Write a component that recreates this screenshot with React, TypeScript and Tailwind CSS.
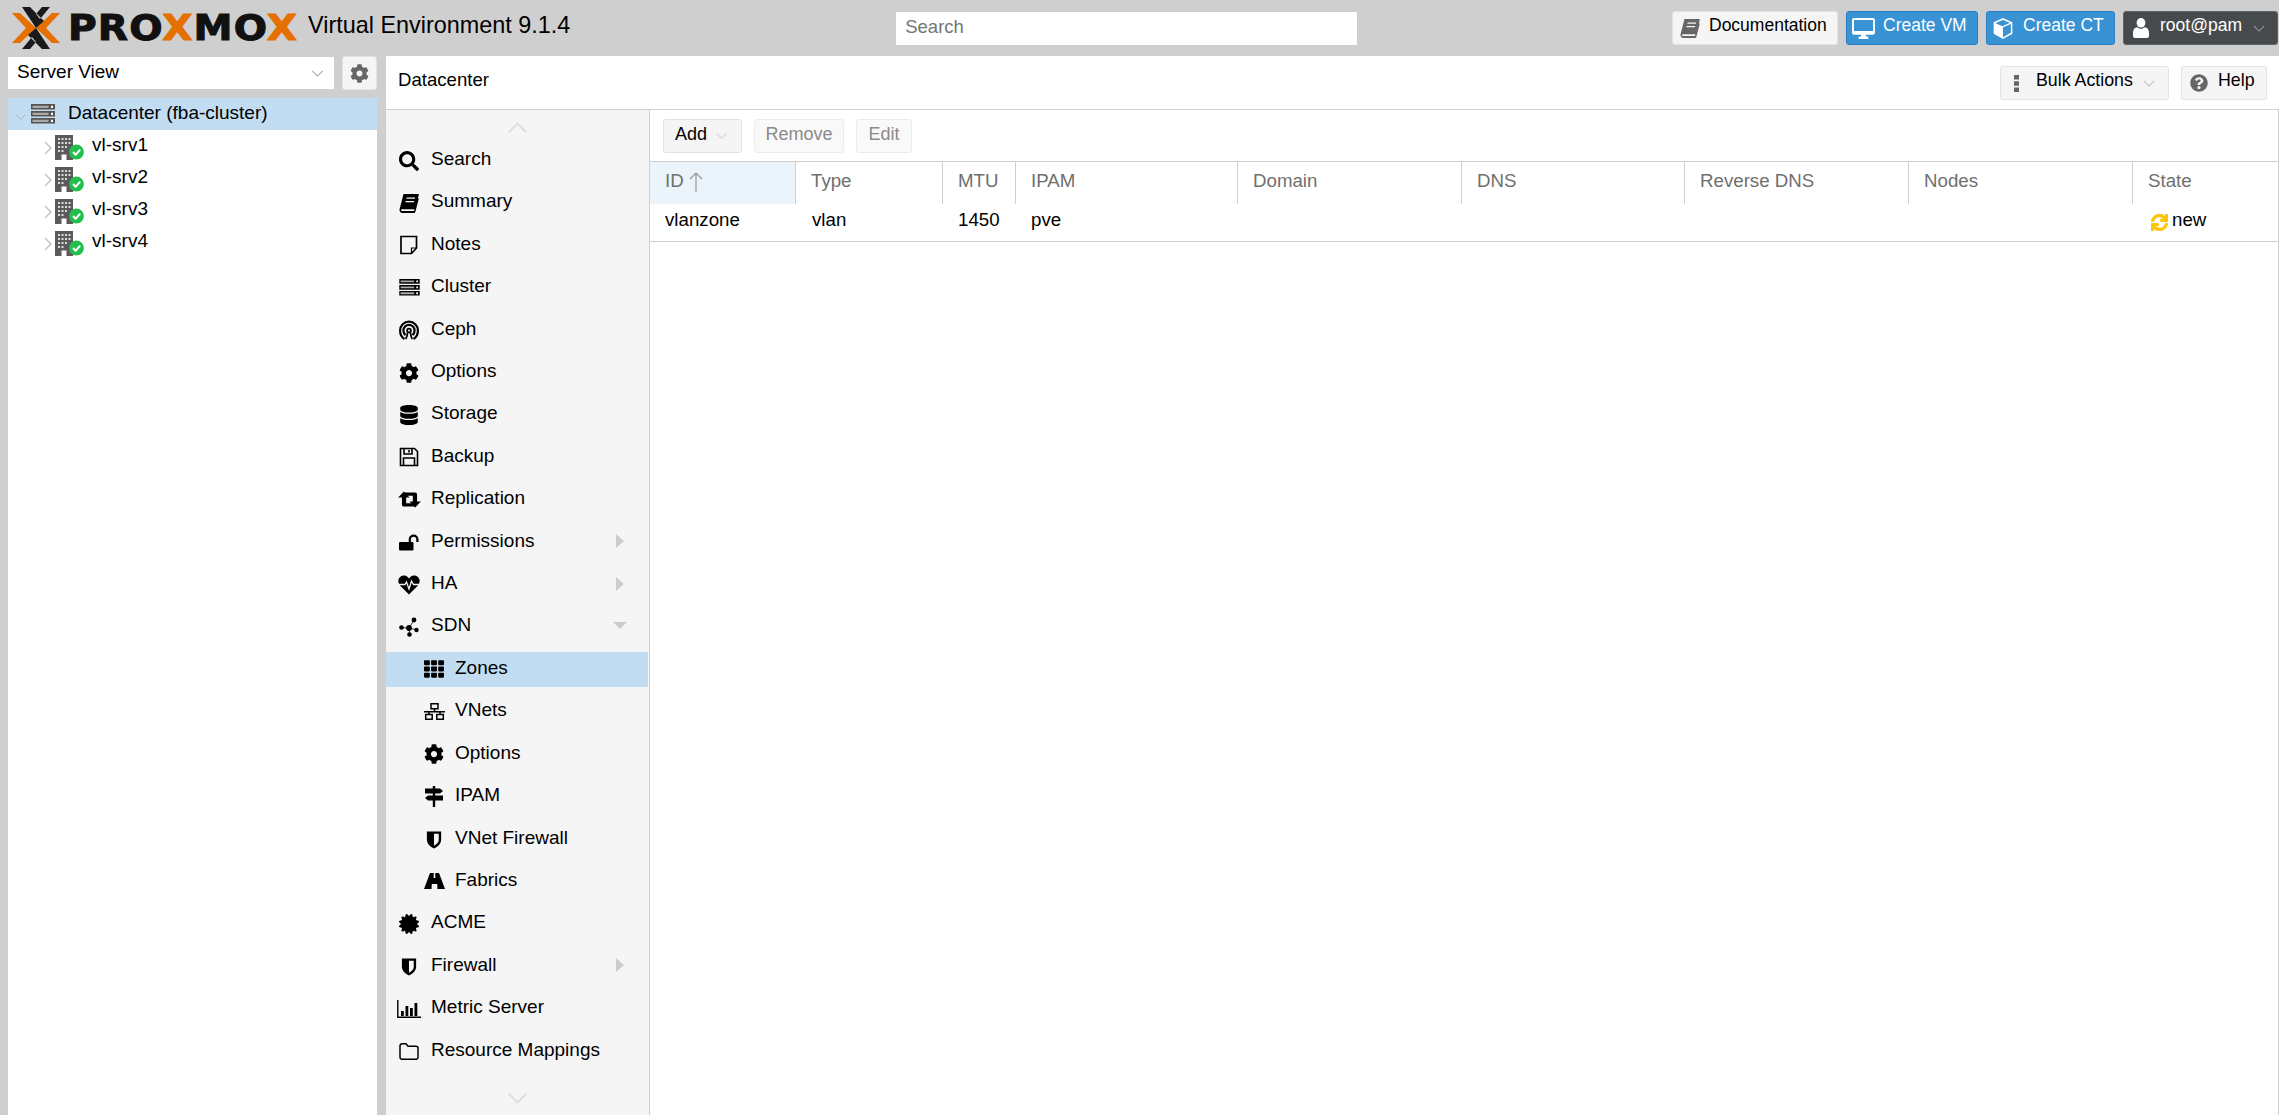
import type { ReactNode } from "react";
import { FaCertificate, FaCog, FaDatabase, FaQuestionCircle, FaSearch, FaSync, FaTh } from "react-icons/fa";

type IconProps = { className?: string };

const Chevron = ({ className }: IconProps) => (
  <svg viewBox="0 0 14 8" className={className} fill="none" stroke="currentColor" strokeWidth="1.2">
    <path d="M1 1l6 6 6-6" />
  </svg>
);

const BookIcon = ({ className }: IconProps) => (
  <svg viewBox="0 0 20 20" className={className} fill="currentColor">
    <path d="M4.500 1H19c.6 0 1 .5.8 1.100l-3.600 13.100c-.2.7-.7 1-1.300 1H3c-.7 0-.9.6-.9 1 0 .5.4.9 1 .9H15l3.500-13 1.300.6-3.500 13.400c-.2.5-.6.9-1.200.9H3C1.300 19.500.3 18 .5 16.500z" />
    <path d="M7.700 4.500h8.500l-.4 1.300H7.300zM6.700 8h8.500l-.4 1.300H6.300z" fill="#f5f5f5" />
  </svg>
);

const NoteIcon = ({ className }: IconProps) => (
  <svg viewBox="0 0 20 20" className={className} fill="none" stroke="currentColor" strokeWidth="1.700">
    <path d="M2 1.500h15.500v11.500l-5 5.500H2z" />
    <path d="M12.500 18.500v-5.500h5" strokeWidth="1.200" />
  </svg>
);

const ServerStack = ({ className }: IconProps) => (
  <svg viewBox="0 0 24 20" className={className} fill="currentColor">
    <path d="M0 0h24v5.500H0zM0 7h24v5.500H0zM0 14h24v5.500H0z" />
    <path d="M1.500 1.700h16v2.200h-16zM1.500 8.700h16v2.200h-16zM1.500 15.700h16v2.200h-16z" fill="#a8a8a8" />
    <path d="M20 1.700h2v2.200h-2zM20 8.700h2v2.200h-2zM20 15.700h2v2.200h-2z" fill="#fff" />
  </svg>
);

const CephIcon = ({ className }: IconProps) => (
  <svg viewBox="0 0 20 20" className={className} fill="none" stroke="currentColor" strokeWidth="2.200">
    <path d="M5.500 19C2.800 17.500 1.100 14 1.100 10.500a8.900 8.900 0 0 1 17.800 0c0 3.500-1.700 7-4.400 8.500" />
    <path d="M6.600 15C5.200 14 4.400 12.300 4.400 10.500a5.600 5.600 0 0 1 11.200 0c0 1.800-.8 3.500-2.200 4.500" />
    <circle cx="10" cy="10.500" r="1.900" strokeWidth="1.800" />
    <path d="M8.500 12.500c0 2.500-.6 4.700-1.800 6.500M11.500 12.500c0 2.500.6 4.700 1.800 6.500" strokeWidth="1.800" />
  </svg>
);

const SaveIcon = ({ className }: IconProps) => (
  <svg viewBox="0 0 20 20" className={className} fill="none" stroke="currentColor" strokeWidth="1.600">
    <path d="M1.500 1.500h14l3 3v14h-17z" />
    <path d="M5 1.500v5.500h8V1.500M4.500 18.500v-7.500h11v7.500M10 3v2.500" />
  </svg>
);

const RetweetIcon = ({ className }: IconProps) => (
  <svg viewBox="0 0 24 18" className={className} fill="currentColor">
    <path d="M0 7L6 .5 12 7H8.500v6H15l3 3.500H6q-2 0-2-2V7z" />
    <path d="M24 11l-6 6.500L12 11h3.500V5H9L6 1.500h12q2 0 2 2V11z" />
  </svg>
);

const UnlockIcon = ({ className }: IconProps) => (
  <svg viewBox="0 0 20 16" className={className} fill="currentColor">
    <rect x="0" y="7.500" width="14.500" height="8.500" rx="1" />
    <path d="M10.800 8V5a3.800 3.800 0 0 1 7.600 0v2.500" fill="none" stroke="currentColor" strokeWidth="2.200" />
  </svg>
);

const HeartbeatIcon = ({ className }: IconProps) => (
  <svg viewBox="0 0 22 20" className={className}>
    <path
      d="M11 19.500L2 10.500C-1.500 6 1 .5 6 .5c2.500 0 4 1.500 5 3 1-1.500 2.500-3 5-3 5 0 7.500 5.500 4 10z"
      fill="currentColor"
    />
    <path d="M0 9.500h7l1.500-2.500 2.500 7 2.500-8 2 3.500h6.500" fill="none" stroke="#f5f5f5" strokeWidth="1.300" />
  </svg>
);

const SdnIcon = ({ className }: IconProps) => (
  <svg viewBox="0 0 20 20" className={className} fill="currentColor">
    <path d="M10 11L15 3M10 11L2 10.500M10 11l8 2M10 11l.5 6" stroke="currentColor" strokeWidth="0.800" />
    <circle cx="15" cy="3" r="2.400" />
    <circle cx="2.500" cy="10.500" r="2.300" />
    <circle cx="10" cy="11" r="2.900" />
    <circle cx="17.500" cy="13" r="2.200" />
    <circle cx="10.500" cy="17.500" r="2.300" />
  </svg>
);

const SitemapIcon = ({ className }: IconProps) => (
  <svg viewBox="0 0 21 17" className={className} fill="none" stroke="currentColor" strokeWidth="1.500">
    <path d="M7 .8h7v5H7zM1.700 11.500h6.500v4.700H1.700zM12.800 11.500h6.500v4.700h-6.500zM10.500 5.800v3M0 8.800h21M5 8.800v2.700M16 8.800v2.700" />
  </svg>
);

const SignsIcon = ({ className }: IconProps) => (
  <svg viewBox="0 0 20 21" className={className} fill="currentColor">
    <path d="M8.800 0h2.400v21H8.800z" />
    <path d="M1 2.500h15l3 2.500-3 2.500H1zM19 9.500H4l-3 2.500 3 2.500h15z" />
  </svg>
);

const ShieldIcon = ({ className }: IconProps) => (
  <svg viewBox="0 0 16 20" className={className}>
    <path d="M.5 1.500h15V10c0 4.500-3.500 7.500-7.500 9.500C4 17.500.5 14.500.5 10z" fill="currentColor" />
    <path d="M8 4h5v6.500c0 2.500-2.300 4.500-5 6z" fill="#f5f5f5" />
  </svg>
);

const RoadIcon = ({ className }: IconProps) => (
  <svg viewBox="0 0 21 16" className={className} fill="currentColor">
    <path d="M6 0h3.800l-.2 5h1.800l-.2-5H15l6 16h-7.500l-.3-5h-5.400l-.3 5H0z" />
  </svg>
);

const ChartIcon = ({ className }: IconProps) => (
  <svg viewBox="0 0 24 18" className={className} fill="currentColor">
    <path d="M.8 0v17.300H24" fill="none" stroke="currentColor" strokeWidth="1.400" />
    <path d="M4 11h2.800v5H4zM8.500 6h2.800v10H8.500zM13 8h2.800v8H13zM17.500 3h2.800v13h-2.800z" />
  </svg>
);

const FolderIcon = ({ className }: IconProps) => (
  <svg viewBox="0 0 20 17" className={className} fill="none" stroke="currentColor" strokeWidth="1.500">
    <path d="M1 2.800a2 2 0 0 1 2-2h4l2 2.500h8a2 2 0 0 1 2 2v9a2 2 0 0 1-2 2H3a2 2 0 0 1-2-2z" />
  </svg>
);

const MonitorIcon = ({ className }: IconProps) => (
  <svg viewBox="0 0 24 22" className={className} fill="currentColor">
    <path
      fillRule="evenodd"
      d="M2 0h20a2 2 0 0 1 2 2v13.500a2 2 0 0 1-2 2H2a2 2 0 0 1-2-2V2a2 2 0 0 1 2-2zM2 2v11.500h20V2z"
    />
    <path d="M9.500 17h5v2.500h2.500V22H7v-2.500h2.500z" />
  </svg>
);

const CubeIcon = ({ className }: IconProps) => (
  <svg viewBox="0 0 20 22" className={className}>
    <path d="M10 1l9 4v11l-9 5-9-5V5z" fill="none" stroke="currentColor" strokeWidth="1.600" />
    <path d="M1 5l9 4v12l-9-5z" fill="currentColor" />
    <path d="M10 9l9-4" stroke="currentColor" strokeWidth="1.400" />
  </svg>
);

const UserIcon = ({ className }: IconProps) => (
  <svg viewBox="0 0 16 20" className={className} fill="currentColor">
    <ellipse cx="8" cy="4.800" rx="4.400" ry="4.800" />
    <path d="M0 18v-2.500C0 12 1.500 9.500 4.200 9.300c1 .9 2.400 1.500 3.800 1.500s2.800-.6 3.800-1.500C14.500 9.500 16 12 16 15.500V18q0 2-2 2H2q-2 0-2-2z" />
  </svg>
);

const DotsIcon = ({ className }: IconProps) => (
  <svg viewBox="0 0 5 17" className={className} fill="currentColor">
    <path d="M0 0h5v4.500H0zM0 6.200h5v4.500H0zM0 12.500h5V17H0z" />
  </svg>
);

const NodeIcon = () => (
  <svg viewBox="0 0 29 26" className="mt-[2px] h-[26px] w-[29px] shrink-0">
    <path d="M0 1h18v25H0z" fill="#5a5a5a" />
    <path
      d="M3 4h2v2H3zM6.500 4h2v2h-2zM10 4h2v2h-2zM13.500 4h2v2h-2zM3 8h2v2H3zM6.500 8h2v2h-2zM10 8h2v2h-2zM13.500 8h2v2h-2zM3 12h2v2H3zM6.500 12h2v2h-2zM10 12h2v2h-2zM3 16h2v2H3zM6.500 16h2v2h-2z"
      fill="#d8d8d8"
    />
    <path d="M6.500 20.500h5V26h-5z" fill="#fff" />
    <circle cx="21.500" cy="18" r="7.400" fill="#21bf4b" />
    <path d="M18 18l2.700 2.700 4.500-5" fill="none" stroke="#fff" strokeWidth="2" />
  </svg>
);

const ToolButton = ({ children, className = "" }: { children: ReactNode; className?: string }) => (
  <div className={`flex h-[34px] items-center rounded-[3px] border ${className}`}>{children}</div>
);

const Label = ({ children, className = "" }: { children: ReactNode; className?: string }) => (
  <span className={`pb-[4px] leading-none whitespace-nowrap ${className}`}>{children}</span>
);

type MenuItem = {
  label: string;
  icon: ReactNode;
  sub?: boolean;
  arrow?: "right" | "down";
  selected?: boolean;
};

const iconCls = "h-[20px] w-[20px]";

const menu: MenuItem[] = [
  { label: "Search", icon: <FaSearch className={iconCls} /> },
  { label: "Summary", icon: <BookIcon className={iconCls} /> },
  { label: "Notes", icon: <NoteIcon className={iconCls} /> },
  { label: "Cluster", icon: <ServerStack className="h-[17px] w-[21px]" /> },
  { label: "Ceph", icon: <CephIcon className={iconCls} /> },
  { label: "Options", icon: <FaCog className={iconCls} /> },
  { label: "Storage", icon: <FaDatabase className={iconCls} /> },
  { label: "Backup", icon: <SaveIcon className={iconCls} /> },
  { label: "Replication", icon: <RetweetIcon className="h-[17px] w-[23px]" /> },
  { label: "Permissions", icon: <UnlockIcon className="h-[17px] w-[20px]" />, arrow: "right" },
  { label: "HA", icon: <HeartbeatIcon className="h-[20px] w-[22px]" />, arrow: "right" },
  { label: "SDN", icon: <SdnIcon className={iconCls} />, arrow: "down" },
  { label: "Zones", icon: <FaTh className={iconCls} />, sub: true, selected: true },
  { label: "VNets", icon: <SitemapIcon className="h-[17px] w-[21px]" />, sub: true },
  { label: "Options", icon: <FaCog className={iconCls} />, sub: true },
  { label: "IPAM", icon: <SignsIcon className="h-[21px] w-[20px]" />, sub: true },
  { label: "VNet Firewall", icon: <ShieldIcon className="h-[19px] w-[16px]" />, sub: true },
  { label: "Fabrics", icon: <RoadIcon className="h-[16px] w-[21px]" />, sub: true },
  { label: "ACME", icon: <FaCertificate className={iconCls} /> },
  { label: "Firewall", icon: <ShieldIcon className="h-[19px] w-[16px]" />, arrow: "right" },
  { label: "Metric Server", icon: <ChartIcon className="h-[18px] w-[24px]" /> },
  { label: "Resource Mappings", icon: <FolderIcon className="h-[17px] w-[20px]" /> },
];

const columns = [
  { label: "ID", w: "w-[146px]" },
  { label: "Type", w: "w-[147px]" },
  { label: "MTU", w: "w-[73px]" },
  { label: "IPAM", w: "w-[222px]" },
  { label: "Domain", w: "w-[224px]" },
  { label: "DNS", w: "w-[223px]" },
  { label: "Reverse DNS", w: "w-[224px]" },
  { label: "Nodes", w: "w-[224px]" },
  { label: "State", w: "flex-1" },
];

const nodes = ["vl-srv1", "vl-srv2", "vl-srv3", "vl-srv4"];

const plainBtn = "border-[#e3e3e3] bg-[#f5f5f5] text-black";
const disabledBtn = "border-[#ececec] bg-[#f9f9f9] text-[#8a8a8a]";
const blueBtn = "border-[#2a80c4] bg-[#3892d4] text-white";

export default function App() {
  return (
    <div className="flex h-[1115px] w-[2279px] flex-col overflow-hidden bg-[#cfcfcf] font-['Liberation_Sans',Arial,sans-serif] text-[19px] text-black">
      {/* Top bar */}
      <header className="flex h-[56px] shrink-0 items-center">
        <div className="ml-[12px] flex w-[296px] items-center">
          <svg viewBox="0 0 48 42" className="h-[42px] w-[48px] shrink-0">
            <path d="M0 6h8l16 15-16 15H0l14-15z" fill="#e57000" />
            <path d="M48 6h-8L24 21l16 15h8L34 21z" fill="#e57000" />
            <path d="M10 0h8l14 14-8 7zM38 0h-8L24 7l4 5zM10 42h8l6-7-4-5zM38 42h-8L16 28l8-7z" fill="#1a1a1a" />
          </svg>
          <div className="ml-[8px] origin-left scale-x-[1.12] font-['DejaVu_Sans',sans-serif] text-[35px] leading-none font-bold tracking-[1px] whitespace-nowrap text-[#111] [-webkit-text-stroke-width:1px]">
            PRO<span className="text-[#e57000]">X</span>MO<span className="text-[#e57000]">X</span>
          </div>
        </div>
        <span className="mb-[4px] text-[23.4px] leading-none whitespace-nowrap">Virtual Environment 9.1.4</span>
        <div className="ml-[326px] flex h-[33px] w-[461px] items-center bg-white pb-[2px] pl-[9px] text-[18.5px] text-[#757575]">
          Search
        </div>
        <div className="ml-auto flex h-[34px] items-center gap-[8px] pr-[1px] text-[17.5px]">
          <ToolButton className={`w-[166px] pl-[7px] ${plainBtn}`}>
            <BookIcon className="h-[20px] w-[20px] text-[#666]" />
            <Label className="ml-[9px]">Documentation</Label>
          </ToolButton>
          <ToolButton className={`w-[132px] pl-[5px] ${blueBtn}`}>
            <MonitorIcon className="h-[21px] w-[23px]" />
            <Label className="ml-[8px]">Create VM</Label>
          </ToolButton>
          <ToolButton className={`w-[129px] pl-[6px] ${blueBtn}`}>
            <CubeIcon className="h-[21px] w-[20px]" />
            <Label className="ml-[10px]">Create CT</Label>
          </ToolButton>
          <ToolButton className="w-[155px] border-[#5f6463] bg-[#474a4d] pl-[9px] text-white">
            <UserIcon className="h-[20px] w-[16px]" />
            <Label className="ml-[11px]">root@pam</Label>
            <Chevron className="ml-[11px] h-[7px] w-[12px] text-[#999]" />
          </ToolButton>
        </div>
      </header>

      <div className="flex min-h-0 flex-1">
        {/* Resource tree */}
        <aside className="flex w-[386px] shrink-0 flex-col pr-[9px] pl-[8px]">
          <div className="flex h-[42px] shrink-0 items-start justify-between">
            <div className="mt-[1px] flex h-[32px] w-[326px] items-center justify-between bg-white pr-[10px] pl-[9px]">
              <Label className="pb-[2px]">Server View</Label>
              <Chevron className="h-[7px] w-[13px] text-[#a8a8a8]" />
            </div>
            <div className="flex h-[34px] w-[35px] items-center justify-center rounded-[3px] border border-[#e3e3e3] bg-[#f5f5f5]">
              <FaCog className="h-[19px] w-[19px] text-[#666]" />
            </div>
          </div>
          <div className="flex-1 bg-white">
            <div className="flex h-[32px] items-center bg-[#c2ddf2]">
              <Chevron className="mt-[5px] ml-[7px] h-[6px] w-[11px] text-[#aaa]" />
              <ServerStack className="ml-[5px] h-[20px] w-[24px] text-[#555]" />
              <Label className="ml-[13px] pb-0">Datacenter (fba-cluster)</Label>
            </div>
            {nodes.map((n) => (
              <div key={n} className="flex h-[32px] items-center">
                <Chevron className="mt-[3px] ml-[33px] h-[8px] w-[14px] -rotate-90 text-[#bbb]" />
                <NodeIcon />
                <Label className="ml-[8px] pb-[2px]">{n}</Label>
              </div>
            ))}
          </div>
        </aside>

        <main className="flex min-w-0 flex-1 flex-col bg-white">
          {/* Content header */}
          <div className="flex h-[54px] shrink-0 items-center justify-between border-b border-[#cfcfcf] px-[12px]">
            <Label className="pb-[2px] text-[18.6px]">Datacenter</Label>
            <div className="mt-[1px] flex gap-[12px] text-[17.8px]">
              <ToolButton className={`w-[169px] pl-[13px] ${plainBtn}`}>
                <DotsIcon className="h-[17px] w-[5px] text-[#666]" />
                <Label className="ml-[17px]">Bulk Actions</Label>
                <Chevron className="ml-[10px] h-[7px] w-[12px] text-[#bbb]" />
              </ToolButton>
              <ToolButton className={`w-[86px] pl-[8px] ${plainBtn}`}>
                <FaQuestionCircle className="h-[18px] w-[18px] text-[#666]" />
                <Label className="ml-[10px]">Help</Label>
              </ToolButton>
            </div>
          </div>

          <div className="flex min-h-0 flex-1">
            {/* Config menu */}
            <nav className="flex w-[264px] shrink-0 flex-col overflow-hidden border-r border-[#cfcfcf] bg-[#f5f5f5]">
              <div className="flex h-[33px] shrink-0 items-center justify-center pt-[3px]">
                <Chevron className="h-[12px] w-[23px] rotate-180 text-[#ddd]" />
              </div>
              <div className="mr-[1px] flex flex-col gap-[7.42px]">
                {menu.map((m, i) => (
                  <div
                    key={i}
                    className={`flex h-[35px] shrink-0 items-center ${m.selected ? "bg-[#c2ddf2]" : ""}`}
                  >
                    <span className={`flex w-[24px] shrink-0 items-center justify-center ${m.sub ? "ml-[36px]" : "ml-[11px]"}`}>
                      {m.icon}
                    </span>
                    <Label className={m.sub ? "ml-[9px]" : "ml-[10px]"}>{m.label}</Label>
                    {m.arrow === "right" && (
                      <span className="mr-[24px] mb-[2px] ml-auto h-0 w-0 border-y-[7px] border-l-[8px] border-y-transparent border-l-[#ccc]" />
                    )}
                    {m.arrow === "down" && (
                      <span className="mr-[21px] mb-[2px] ml-auto h-0 w-0 border-x-[7px] border-t-[7px] border-x-transparent border-t-[#ccc]" />
                    )}
                  </div>
                ))}
              </div>
              <div className="flex h-[48px] shrink-0 items-center justify-center pt-[10px]">
                <Chevron className="h-[12px] w-[23px] text-[#ddd]" />
              </div>
            </nav>

            {/* Zones grid */}
            <section className="flex min-w-0 flex-1 flex-col border-r border-[#cfcfcf] text-[18.7px]">
              <div className="flex h-[52px] shrink-0 items-start gap-[12px] border-b border-[#cfcfcf] pt-[9px] pl-[13px] text-[18px]">
                <ToolButton className={`w-[79px] pl-[11px] ${plainBtn}`}>
                  <Label>Add</Label>
                  <Chevron className="ml-[9px] h-[6px] w-[11px] text-[#bbb]" />
                </ToolButton>
                <ToolButton className={`w-[90px] justify-center ${disabledBtn}`}>
                  <Label>Remove</Label>
                </ToolButton>
                <ToolButton className={`w-[56px] justify-center ${disabledBtn}`}>
                  <Label>Edit</Label>
                </ToolButton>
              </div>
              <div className="flex h-[42px] shrink-0 text-[#6f6f6f]">
                {columns.map((c, i) => (
                  <div
                    key={c.label}
                    className={`flex items-center px-[15px] ${c.w} ${i < columns.length - 1 ? "border-r border-[#cfcfcf]" : ""} ${i === 0 ? "bg-[#ecf4fb]" : ""}`}
                  >
                    <Label>{c.label}</Label>
                    {i === 0 && (
                      <svg viewBox="0 0 14 20" className="mb-[2px] ml-[5px] h-[20px] w-[14px]" fill="none" stroke="#999" strokeWidth="1.200">
                        <path d="M7 20V1M1 7l6-6 6 6" />
                      </svg>
                    )}
                  </div>
                ))}
              </div>
              <div className="flex h-[38px] shrink-0 items-center border-b border-[#cfcfcf]">
                <Label className="w-[146px] shrink-0 pb-[2px] pl-[15px]">vlanzone</Label>
                <Label className="w-[147px] shrink-0 pb-[2px] pl-[16px]">vlan</Label>
                <Label className="w-[73px] shrink-0 pb-[2px] pl-[15px]">1450</Label>
                <Label className="w-[1117px] shrink-0 pb-[2px] pl-[15px]">pve</Label>
                <FaSync className="ml-[18px] h-[17px] w-[17px] text-[#fdc500]" stroke="currentColor" strokeWidth={30} />
                <Label className="ml-[4px] pb-[2px]">new</Label>
              </div>
            </section>
          </div>
        </main>
      </div>
    </div>
  );
}
